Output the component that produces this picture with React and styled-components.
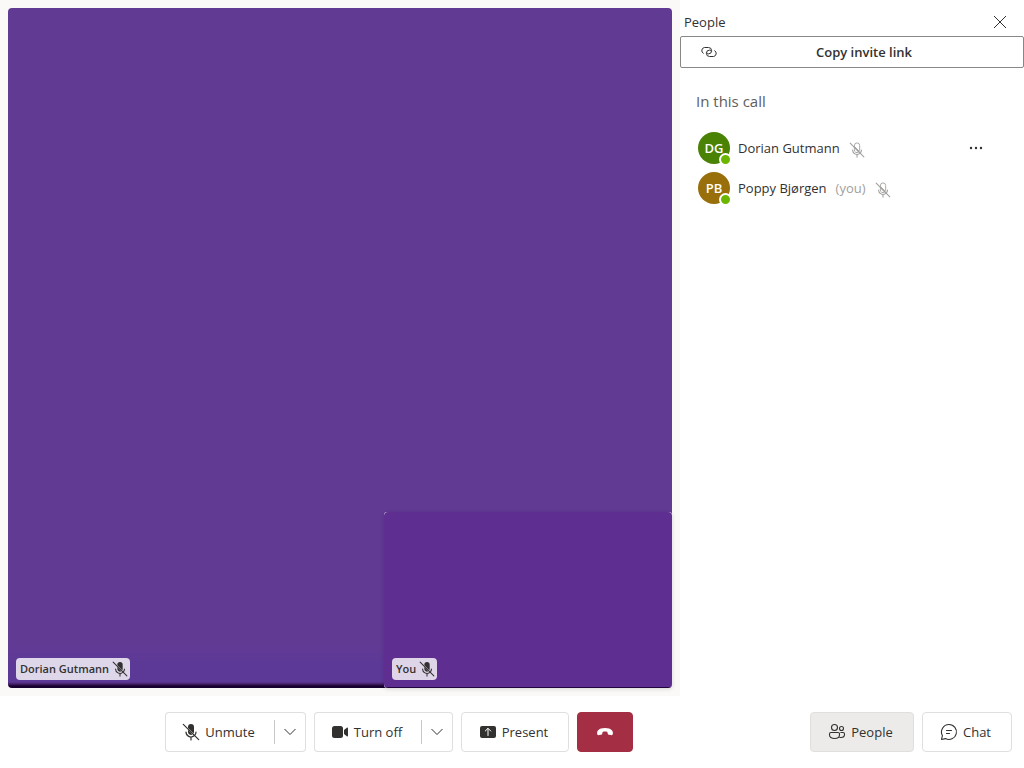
import React from "react";
import styled, { createGlobalStyle } from "styled-components";

const GlobalStyle = createGlobalStyle`
  * { box-sizing: border-box; }
  body {
    margin: 0;
    background: #ffffff;
    color: #323130;
    font-family: "Open Sans", "Noto Sans", sans-serif;
    font-size: 13px;
    line-height: 20px;
  }
  button { font: inherit; color: inherit; cursor: pointer; }
  h2, h3, ul { margin: 0; padding: 0; font-weight: 400; }
  svg { display: block; flex: none; }
`;

const Page = styled.div`
  display: flex;
  flex-direction: column;
  min-height: 100vh;
`;

const Content = styled.div`
  display: flex;
  flex: 1;
`;

const Stage = styled.main`
  display: flex;
  flex: 1;
  min-width: 0;
  padding: 8px;
  background: #faf9f8;
`;

const RemoteTile = styled.section`
  position: relative;
  flex: 1;
  border-radius: 4px;
  background: linear-gradient(to top, #180030 0, #180030 2px, #472268 4px, #5c3897 6px, #5d3997 24px, #613a94 44px);
`;

const LocalTile = styled.section`
  position: absolute;
  right: 0;
  bottom: 0;
  width: 288px;
  height: 176px;
  border-radius: 3px;
  background: #f3eef8;
  box-shadow: 0 1px 4px rgba(0, 0, 0, 0.14);
  &::before {
    content: "";
    position: absolute;
    inset: 0;
    border-radius: 4px;
    background: linear-gradient(to top, #22043f 0, #22043f 1px, #5e2e91 1px);
  }
`;

const TileLabel = styled.div`
  position: absolute;
  left: 8px;
  bottom: 8px;
  display: flex;
  align-items: center;
  gap: 3px;
  height: 22px;
  padding: 0 2px 0 4px;
  border-radius: 4px;
  background: rgba(255, 255, 255, 0.8);
  font-size: 11px;
  font-weight: 600;
  white-space: nowrap;
`;

const Panel = styled.aside`
  width: 344px;
  flex: none;
  background: #ffffff;
`;

const PanelHeader = styled.div`
  display: flex;
  align-items: center;
  justify-content: space-between;
  padding: 8px 8px 0 4px;
  h2 { font-size: 13px; }
`;

const IconButton = styled.button`
  display: flex;
  align-items: center;
  justify-content: center;
  width: 32px;
  height: 28px;
  padding: 0;
  border: 0;
  background: transparent;
`;

const CopyButton = styled.button`
  display: flex;
  align-items: center;
  gap: 1px;
  width: 100%;
  height: 32px;
  padding: 0 15px 0 18px;
  border: 1px solid #8a8886;
  border-radius: 2px;
  background: #ffffff;
  font-weight: 600;
  span { flex: 1; }
`;

const SectionTitle = styled.h3`
  margin: 23px 16px 17px;
  color: #605e5c;
  font-size: 15px;
  line-height: 20px;
`;

const PeopleList = styled.ul`
  list-style: none;
`;

const Person = styled.li`
  display: flex;
  align-items: center;
  gap: 9px;
  height: 40px;
  padding: 0 32px 0 18px;
  ${IconButton} { margin-left: auto; }
`;

const Avatar = styled.div`
  position: relative;
  display: flex;
  align-items: center;
  justify-content: center;
  width: 32px;
  height: 32px;
  margin-right: -1px;
  border-radius: 50%;
  background: ${(p) => p.$color};
  color: #ffffff;
  font-weight: 600;
`;

const Presence = styled.span`
  position: absolute;
  right: -2px;
  bottom: -2px;
  width: 13px;
  height: 13px;
  border: 2px solid #ffffff;
  border-radius: 50%;
  background: #6bb700;
`;

const You = styled.span`
  color: #a19f9d;
`;

const PersonMic = styled.span`
  padding-top: 4px;
  color: #a19f9d;
`;

const ControlBar = styled.footer`
  display: flex;
  align-items: center;
  gap: 12px;
  padding: 16px 12px 16px 0;
  background: #ffffff;
`;

const Controls = styled.div`
  display: flex;
  flex: 1;
  justify-content: center;
  gap: 8px;
`;

const SideControls = styled.div`
  display: flex;
  gap: 8px;
`;

const ControlButton = styled.button`
  display: flex;
  align-items: center;
  justify-content: center;
  gap: 4px;
  min-width: ${(p) => p.$width}px;
  height: 40px;
  padding: 0 ${(p) => (p.$labelled ? 4 : 0)}px 0 0;
  border: 1px solid #e1dfdd;
  border-radius: 4px;
  background: ${(p) => (p.$active ? "#edebe9" : "#ffffff")};
  white-space: nowrap;
`;

const SplitButton = styled.div`
  display: flex;
  ${ControlButton}:first-child {
    border-right: 0;
    border-radius: 4px 0 0 4px;
  }
  ${ControlButton}:last-child {
    border-left: 0;
    border-radius: 0 4px 4px 0;
  }
`;

const Divider = styled.span`
  width: 1px;
  height: 24px;
  align-self: center;
  background: #c8c6c4;
`;

const SplitMiddle = styled.span`
  display: flex;
  border: solid #e1dfdd;
  border-width: 1px 0;
`;

const EndButton = styled(ControlButton)`
  border-color: #a42e43;
  background: #a42e43;
  color: #ffffff;
`;

function MicOffIcon({ size = 20, box = "0 0 20 20", outline = false }) {
  return (
    <svg width={size} height={size} viewBox={box} fill="none" stroke="currentColor" strokeLinecap="round" aria-hidden="true">
      <path d="M7 5a3 3 0 0 1 6 0v5a3 3 0 0 1-.4 1.5L7 5.9z" fill={outline ? "none" : "currentColor"} strokeWidth={outline ? 1 : 0} />
      <path d="M7 7.7V10a3 3 0 0 0 4.5 2.6z" fill={outline ? "none" : "currentColor"} strokeWidth={outline ? 1 : 0} />
      <path d="M5 10a5 5 0 0 0 7.8 4.1M15 10a5 5 0 0 1-.8 2.7M10 15v3M2.3 2.3l15.4 15.4" strokeWidth="1.2" />
    </svg>
  );
}

function CameraIcon() {
  return (
    <svg width="20" height="20" viewBox="0 0 20 20" fill="currentColor" aria-hidden="true">
      <rect x="2" y="4" width="11" height="12" rx="2.5" />
      <path d="M14 8.1 16.8 5.7c.5-.4 1.2-.1 1.2.5v7.6c0 .6-.7.9-1.2.5L14 11.9z" />
    </svg>
  );
}

function ChevronIcon() {
  return (
    <svg width="12" height="12" viewBox="0 0 12 12" fill="none" stroke="currentColor" strokeWidth="1" aria-hidden="true">
      <path d="M.5 3 6 8.5 11.5 3" />
    </svg>
  );
}

function PresentIcon() {
  return (
    <svg width="20" height="20" viewBox="0 0 20 20" aria-hidden="true">
      <rect x="2" y="4" width="16" height="12" rx="2" fill="currentColor" />
      <path d="M10 13.5v-7M7.3 9 10 6.3 12.7 9" fill="none" stroke="#ffffff" strokeWidth="1" strokeLinecap="round" strokeLinejoin="round" />
    </svg>
  );
}

function EndCallIcon() {
  return (
    <svg width="20" height="20" viewBox="0 0 20 20" fill="currentColor" aria-hidden="true">
      <path d="M10 6c3.2 0 5.5.9 6.8 2.2 1 1 1.3 2.2 1 3.7-.2.9-1 1.4-1.8 1.2l-2-.4c-.7-.1-1.2-.6-1.3-1.3l-.3-1.5c-1.5-.5-3.3-.5-4.8 0l-.3 1.5c-.1.7-.6 1.2-1.3 1.3l-2 .4c-.8.2-1.6-.3-1.8-1.2-.3-1.5 0-2.7 1-3.7C4.5 6.9 6.8 6 10 6z" />
    </svg>
  );
}

function PeopleIcon() {
  return (
    <svg width="20" height="20" viewBox="0 0 20 20" fill="none" stroke="currentColor" strokeWidth="1.1" aria-hidden="true">
      <circle cx="7.5" cy="5.5" r="3" />
      <circle cx="14.5" cy="6.5" r="2" />
      <path d="M4 10.5h7a1.5 1.5 0 0 1 1.5 1.5v.7c0 2.5-2 3.8-5 3.8s-5-1.3-5-3.8V12A1.5 1.5 0 0 1 4 10.5zM13.4 10.5H16a1.5 1.5 0 0 1 1.5 1.5v.5c0 2.2-1.6 3-3.5 3-.6 0-1.1-.1-1.6-.2" />
    </svg>
  );
}

function ChatIcon() {
  return (
    <svg width="20" height="20" viewBox="0 0 20 20" fill="none" stroke="currentColor" strokeWidth="1.1" strokeLinecap="round" strokeLinejoin="round" aria-hidden="true">
      <path d="M10 2.5a7.5 7.5 0 1 1-3.6 14.1l-3.9.9.9-3.9A7.5 7.5 0 0 1 10 2.5zM7.5 8.5h5M7.5 11.5h3" />
    </svg>
  );
}

function LinkIcon() {
  return (
    <svg width="20" height="20" viewBox="0 0 20 20" fill="none" stroke="currentColor" strokeWidth="1" strokeLinecap="round" aria-hidden="true">
      <path d="M4.2 11.3A3.2 3.2 0 0 1 5.4 5.5h4a3.2 3.2 0 0 1 0 6.4c-.9 0-1.5-.4-1.8-.9" />
      <path d="M15.8 8.7a3.2 3.2 0 0 1-1.2 5.8h-4a3.2 3.2 0 0 1 0-6.4c.9 0 1.5.4 1.8.9" />
    </svg>
  );
}

function CloseIcon() {
  return (
    <svg width="14" height="14" viewBox="0 0 14 14" fill="none" stroke="currentColor" strokeWidth="1" aria-hidden="true">
      <path d="m1 1 12 12M13 1 1 13" />
    </svg>
  );
}

function MoreIcon() {
  return (
    <svg width="16" height="16" viewBox="0 0 16 16" fill="currentColor" aria-hidden="true">
      <circle cx="3" cy="8" r="1.2" />
      <circle cx="8" cy="8" r="1.2" />
      <circle cx="13" cy="8" r="1.2" />
    </svg>
  );
}

const people = [
  { name: "Dorian Gutmann", initials: "DG", color: "#498205" },
  { name: "Poppy Bjørgen", initials: "PB", color: "#986f0b", you: true },
];

function PersonRow({ person }) {
  return (
    <Person>
      <Avatar $color={person.color}>
        {person.initials}
        <Presence />
      </Avatar>
      <span>{person.name}</span>
      {person.you && <You>(you)</You>}
      <PersonMic><MicOffIcon size={16} box="1 1 18 18" outline /></PersonMic>
      {!person.you && <IconButton aria-label="More options"><MoreIcon /></IconButton>}
    </Person>
  );
}

function SplitControl({ icon, label, width, menuLabel }) {
  return (
    <SplitButton>
      <ControlButton $width={width} $labelled>{icon}{label}</ControlButton>
      <SplitMiddle><Divider /></SplitMiddle>
      <ControlButton $width={31} aria-label={menuLabel}><ChevronIcon /></ControlButton>
    </SplitButton>
  );
}

export default function App() {
  return (
    <Page>
      <GlobalStyle />
      <Content>
        <Stage>
          <RemoteTile>
            <TileLabel>Dorian Gutmann<MicOffIcon size={16} box="1 1 18 18" /></TileLabel>
            <LocalTile>
              <TileLabel>You<MicOffIcon size={16} box="1 1 18 18" /></TileLabel>
            </LocalTile>
          </RemoteTile>
        </Stage>
        <Panel>
          <PanelHeader>
            <h2>People</h2>
            <IconButton aria-label="Close"><CloseIcon /></IconButton>
          </PanelHeader>
          <CopyButton><LinkIcon /><span>Copy invite link</span></CopyButton>
          <SectionTitle>In this call</SectionTitle>
          <PeopleList>
            {people.map((person) => <PersonRow key={person.name} person={person} />)}
          </PeopleList>
        </Panel>
      </Content>
      <ControlBar>
        <Controls>
          <SplitControl icon={<MicOffIcon />} label="Unmute" width={109} menuLabel="Microphone options" />
          <SplitControl icon={<CameraIcon />} label="Turn off" width={107} menuLabel="Camera options" />
          <ControlButton $width={108} $labelled><PresentIcon />Present</ControlButton>
          <EndButton $width={56} aria-label="Leave call"><EndCallIcon /></EndButton>
        </Controls>
        <SideControls>
          <ControlButton $width={104} $active $labelled><PeopleIcon />People</ControlButton>
          <ControlButton $width={90} $labelled><ChatIcon />Chat</ControlButton>
        </SideControls>
      </ControlBar>
    </Page>
  );
}
